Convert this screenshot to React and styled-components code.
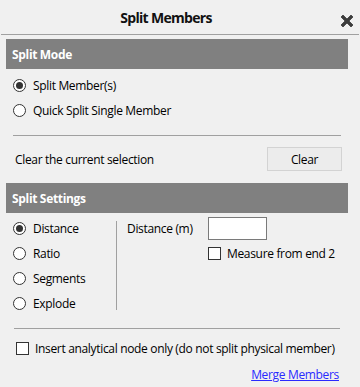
import React, { useState } from 'react';
import styled, { createGlobalStyle } from 'styled-components';

const FONT = `"Open Sans", "Noto Sans", sans-serif`;

const Global = createGlobalStyle`
  html, body {
    margin: 0;
    padding: 0;
    background: #f0f0f0;
  }
  * { box-sizing: border-box; }
`;

export default function App() {
  const [mode, setMode] = useState('split');
  const [setting, setSetting] = useState('distance');
  const [fromEnd, setFromEnd] = useState(false);
  const [nodeOnly, setNodeOnly] = useState(false);

  return (
    <Dialog>
      <Global />
      <TitleBar>
        <Title>Split Members</Title>
        <CloseButton aria-label="Close">
          <svg width="14" height="14" viewBox="0 0 14 14">
            <path
              d="M3 1 L7 5 L11 1 L13 3 L9 7 L13 11 L11 13 L7 9 L3 13 L1 11 L5 7 L1 3 Z"
              fill="#3c3c3c"
              stroke="#3c3c3c"
              strokeWidth="0.8"
              strokeLinejoin="round"
            />
          </svg>
        </CloseButton>
      </TitleBar>

      <Body>
        <SectionHeader>Split Mode</SectionHeader>
        <RadioList>
          <Radio label="Split Member(s)" checked={mode === 'split'} onSelect={() => setMode('split')} />
          <Radio label="Quick Split Single Member" checked={mode === 'quick'} onSelect={() => setMode('quick')} />
        </RadioList>

        <Divider />

        <ClearRow>
          <span>Clear the current selection</span>
          <Button>Clear</Button>
        </ClearRow>

        <SectionHeader>Split Settings</SectionHeader>
        <SettingsGrid>
          <SettingsRadios>
            {['Distance', 'Ratio', 'Segments', 'Explode'].map((l) => (
              <Radio
                key={l}
                label={l}
                checked={setting === l.toLowerCase()}
                onSelect={() => setSetting(l.toLowerCase())}
              />
            ))}
          </SettingsRadios>
          <VRule />
          <SettingsFields>
            <FieldRow>
              <FieldLabel>Distance (m)</FieldLabel>
              <TextInput />
            </FieldRow>
            <CheckRow indent>
              <Check checked={fromEnd} onClick={() => setFromEnd(!fromEnd)} />
              <span>Measure from end 2</span>
            </CheckRow>
          </SettingsFields>
        </SettingsGrid>

        <Divider bottom />

        <CheckRow>
          <Check checked={nodeOnly} onClick={() => setNodeOnly(!nodeOnly)} />
          <span>Insert analytical node only (do not split physical member)</span>
        </CheckRow>

        <LinkRow>
          <Link href="#">Merge Members</Link>
        </LinkRow>
      </Body>
    </Dialog>
  );
}

function Radio({ label, checked, onSelect }) {
  return (
    <RadioRow onClick={onSelect}>
      <RadioDot checked={checked} />
      <span>{label}</span>
    </RadioRow>
  );
}

/* ================= STYLES ================= */

const Dialog = styled.div`
  width: 360px;
  height: 387px;
  background: #f0f0f0;
  font-family: ${FONT};
  font-size: 12px;
  letter-spacing: -0.33px;
  color: #000;
  overflow: hidden;
`;

const TitleBar = styled.div`
  height: 35px;
  margin: 0 1px;
  border-bottom: 1px solid #a0a0a0;
  display: flex;
  align-items: center;
  position: relative;
`;

const Title = styled.div`
  flex: 1;
  text-align: center;
  padding-right: 28px;
  font-weight: 700;
  font-size: 14px;
  letter-spacing: -0.7px;
  color: #111;
`;

const CloseButton = styled.div`
  position: absolute;
  right: 5px;
  top: 14px;
  width: 14px;
  height: 14px;
  display: flex;
`;

const Body = styled.div`
  padding: 4px 12px 0 6px;
`;

const SectionHeader = styled.div`
  height: 30px;
  background: #808080;
  color: #fff;
  font-weight: 700;
  font-size: 12px;
  display: flex;
  align-items: center;
  padding-left: 6px;
`;

const RadioList = styled.div`
  display: flex;
  flex-direction: column;
  padding: 4px 0 0 7px;
`;

const RadioRow = styled.label`
  height: 25px;
  display: flex;
  align-items: center;
  gap: 7px;
  cursor: pointer;
`;

const RadioDot = styled.span`
  width: 13px;
  height: 13px;
  border-radius: 50%;
  border: 1px solid #333;
  background: #fff;
  display: flex;
  align-items: center;
  justify-content: center;
  flex-shrink: 0;

  &::after {
    content: '';
    width: 7px;
    height: 7px;
    border-radius: 50%;
    background: ${({ checked }) => (checked ? '#333' : 'transparent')};
  }
`;

const Divider = styled.div`
  height: 1px;
  background: #a0a0a0;
  margin: ${({ bottom }) => (bottom ? '12px 8px 0 8px' : '12px 7px 0 7px')};
`;

const ClearRow = styled.div`
  display: flex;
  align-items: center;
  justify-content: space-between;
  padding: 11px 6px 12px 9px;
`;

const Button = styled.button`
  width: 75px;
  height: 24px;
  background: #ececec;
  border: 1px solid #d3d3d3;
  font-family: ${FONT};
  font-size: 12px;
  letter-spacing: -0.33px;
  color: #000;
  padding: 0;
`;

const SettingsGrid = styled.div`
  display: flex;
  padding-top: 3px;
`;

const SettingsRadios = styled.div`
  width: 110px;
  display: flex;
  flex-direction: column;
  padding: 0 0 0 7px;
`;

const VRule = styled.div`
  width: 1px;
  background: #a0a0a0;
  margin: 5px 0 6px 0;
`;

const SettingsFields = styled.div`
  flex: 1;
  display: flex;
  flex-direction: column;
  padding: 1px 0 0 10px;
  gap: 5px;
`;

const FieldRow = styled.div`
  display: flex;
  align-items: center;
`;

const FieldLabel = styled.span`
  width: 81px;
`;

const TextInput = styled.input`
  width: 59px;
  height: 23px;
  border: 1px solid #7a7a7a;
  background: #fff;
`;

const CheckRow = styled.label`
  display: flex;
  align-items: center;
  gap: 6px;
  padding-left: ${({ indent }) => (indent ? '81px' : '10px')};
  margin-top: ${({ indent }) => (indent ? '0' : '11px')};
`;

const Check = styled.span`
  width: 13px;
  height: 13px;
  border: 1px solid #333;
  background: #fff;
  flex-shrink: 0;
`;

const LinkRow = styled.div`
  display: flex;
  justify-content: flex-end;
  padding: 9px 9px 0 0;
`;

const Link = styled.a`
  color: #2a2aff;
  text-decoration: underline;
`;
